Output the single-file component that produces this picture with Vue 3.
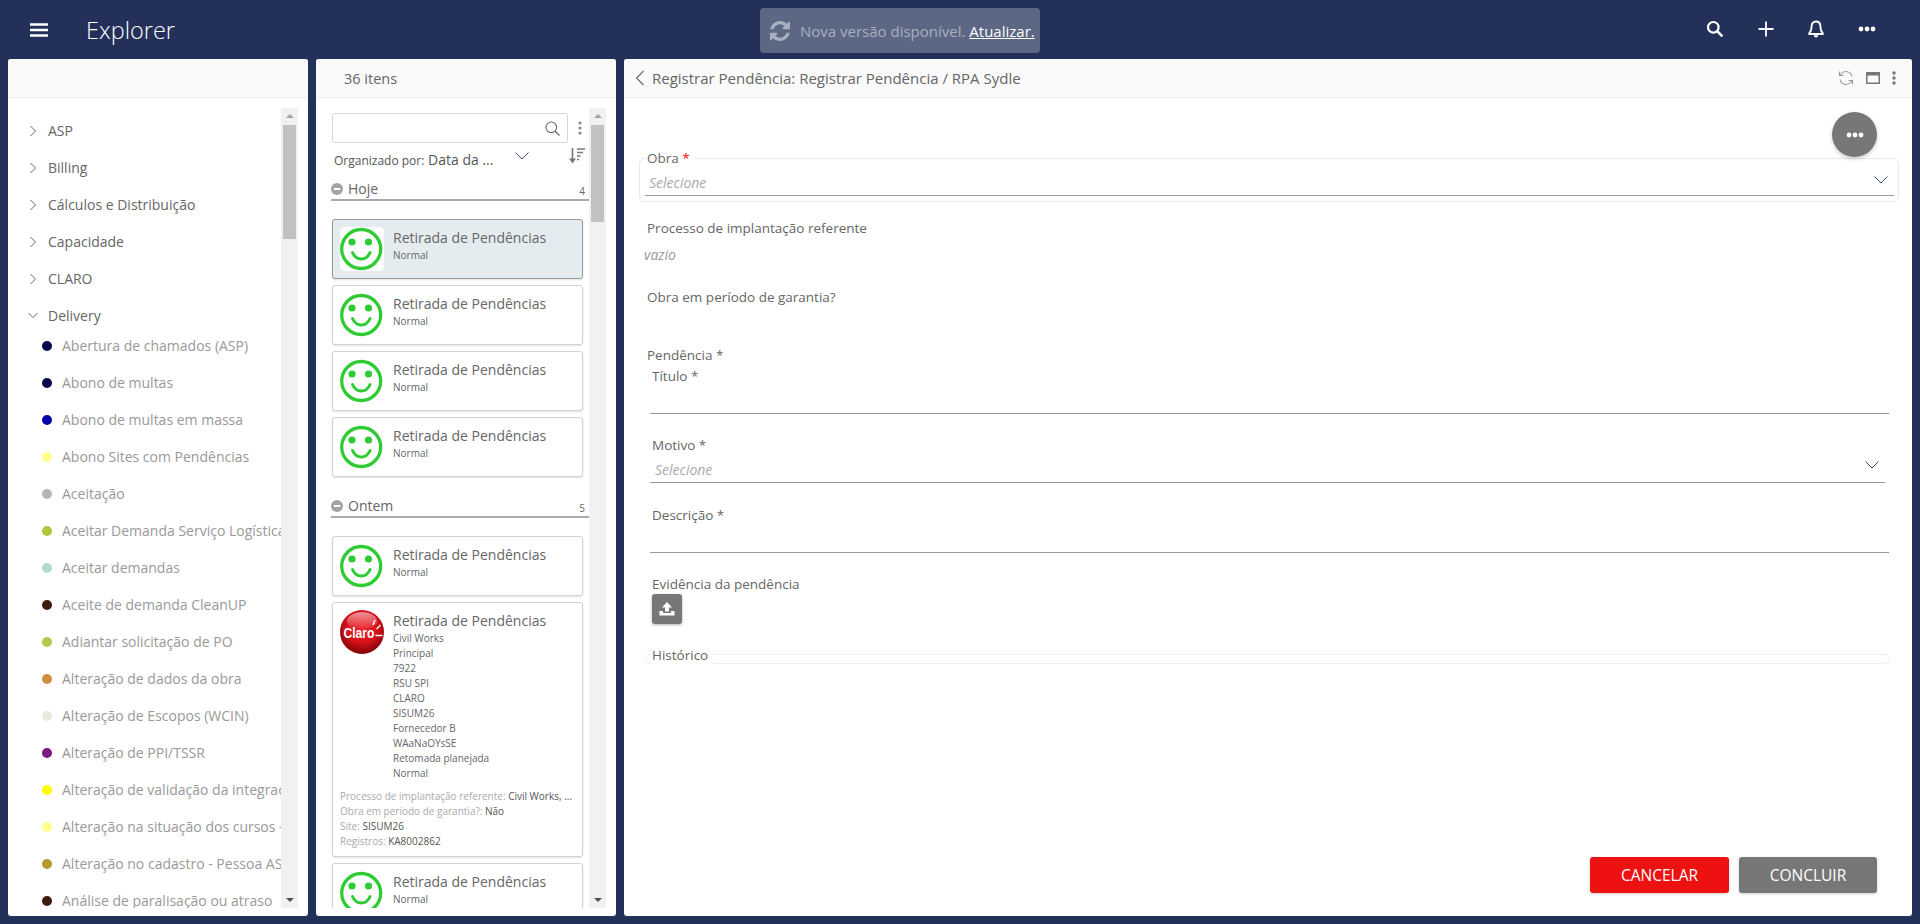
<script setup>
const treeTop = ['ASP', 'Billing', 'Cálculos e Distribuição', 'Capacidade', 'CLARO']
const deliveryItems = [
  { name: 'Abertura de chamados (ASP)', color: '#07074a' },
  { name: 'Abono de multas', color: '#07074a' },
  { name: 'Abono de multas em massa', color: '#0505a8' },
  { name: 'Abono Sites com Pendências', color: '#ffff8c' },
  { name: 'Aceitação', color: '#b5b5b5' },
  { name: 'Aceitar Demanda Serviço Logística', color: '#afc63f' },
  { name: 'Aceitar demandas', color: '#b0dccb' },
  { name: 'Aceite de demanda CleanUP', color: '#3f1a0a' },
  { name: 'Adiantar solicitação de PO', color: '#afc94a' },
  { name: 'Alteração de dados da obra', color: '#cf8f3f' },
  { name: 'Alteração de Escopos (WCIN)', color: '#e9e9dc' },
  { name: 'Alteração de PPI/TSSR', color: '#7a1a80' },
  { name: 'Alteração de validação da integração', color: '#ffff00' },
  { name: 'Alteração na situação dos cursos - ASP', color: '#ffff8c' },
  { name: 'Alteração no cadastro - Pessoa ASP', color: '#b59a2f' },
  { name: 'Análise de paralisação ou atraso', color: '#3f1a0a' }
]
const claroLines = ['Civil Works', 'Principal', '7922', 'RSU SPI', 'CLARO', 'SISUM26', 'Fornecedor B', 'WAaNaOYsSE', 'Retomada planejada', 'Normal']
const claroFields = [
  { k: 'Processo de implantação referente:', v: 'Civil Works, ...' },
  { k: 'Obra em período de garantia?:', v: 'Não' },
  { k: 'Site:', v: 'SISUM26' },
  { k: 'Registros:', v: 'KA8002862' }
]
const groups = [
  { title: 'Hoje', count: 4, cards: [{ selected: true }, {}, {}, {}] },
  { title: 'Ontem', count: 5, cards: [{}, { claro: true }, {}] }
]
</script>

<template>
  <div class="app">
    <header class="topbar">
      <svg class="burger" width="18" height="14" viewBox="0 0 18 14"><path d="M0 1.500h18M0 7h18M0 12.500h18" stroke="#fff" stroke-width="2.400" /></svg>
      <span class="brand">Explorer</span>
      <div class="notice">
        <svg width="20" height="20" viewBox="0 0 1536 1536"><path fill="#a9afbf" d="M1511 928q0 5-1 7-64 268-268 434.500t-478 166.500q-146 0-282.500-55t-243.500-157l-129 129q-19 19-45 19t-45-19-19-45v-448q0-26 19-45t45-19h448q26 0 45 19t19 45-19 45l-137 137q71 66 161 102t187 36q134 0 250-65t186-179q11-17 53-117 8-23 30-23h192q13 0 22.500 9.500t9.500 22.500zm25-800v448q0 26-19 45t-45 19h-448q-26 0-45-19t-19-45 19-45l138-138q-148-137-349-137-134 0-250 65t-186 179q-11 17-53 117-8 23-30 23h-199q-13 0-22.500-9.500t-9.500-22.500v-7q65-268 270-434.500t480-166.500q146 0 284 55.500t245 156.500l130-129q19-19 45-19t45 19 19 45z" /></svg>
        <span>Nova versão disponível. <a class="notice-link">Atualizar.</a></span>
      </div>
      <div class="top-actions">
        <svg width="18" height="18" viewBox="0 0 18 18"><circle cx="7.300" cy="7.300" r="5.300" fill="none" stroke="#fff" stroke-width="2.200" /><path d="M11.200 11.200L16.400 16.400" stroke="#fff" stroke-width="2.600" /></svg>
        <svg width="16" height="16" viewBox="0 0 16 16"><path d="M8 0.500v15M0.500 8h15" stroke="#fff" stroke-width="1.800" /></svg>
        <svg width="16" height="18" viewBox="0 0 16 18"><path d="M8 1.500c-2.900 0-4.400 2.200-4.400 5 0 3.400-.8 5-2.300 6.600v.9h13.400v-.9c-1.500-1.600-2.300-3.200-2.300-6.600 0-2.800-1.500-5-4.400-5z" fill="none" stroke="#fff" stroke-width="1.900" /><path d="M5.800 15.200a2.200 2.200 0 0 0 4.400 0z" fill="#fff" /></svg>
        <svg width="18" height="18" viewBox="0 0 18 18"><circle cx="3" cy="9" r="2.400" fill="#fff" /><circle cx="9" cy="9" r="2.400" fill="#fff" /><circle cx="15" cy="9" r="2.400" fill="#fff" /></svg>
      </div>
    </header>

    <main class="panels">
      <section class="panel panel-tree">
        <div class="panel-head"></div>
        <div class="panel-body">
          <div class="tree">
            <div v-for="item in treeTop" :key="item" class="tree-row">
              <svg width="7" height="12" viewBox="0 0 7 12"><path d="M1 1l5 5-5 5" fill="none" stroke="#666" stroke-width="1" /></svg>
              <span>{{ item }}</span>
            </div>
            <div class="tree-row">
              <svg width="10" height="7" viewBox="0 0 10 7"><path d="M0.500 1l4.500 4.500L9.500 1" fill="none" stroke="#666" stroke-width="1" /></svg>
              <span class="open-label">Delivery</span>
            </div>
            <div class="tree-children">
              <div v-for="item in deliveryItems" :key="item.name" class="tree-child">
                <i class="dot" :style="{ background: item.color }"></i>
                <span>{{ item.name }}</span>
              </div>
            </div>
          </div>
          <div class="scrollbar">
            <i class="arrow-up"></i>
            <div class="thumb thumb-tree"></div>
            <i class="arrow-down"></i>
          </div>
        </div>
      </section>

      <section class="panel panel-list">
        <div class="panel-head list-head">36 itens</div>
        <div class="panel-body">
          <div class="list">
            <div class="search-row">
              <div class="search-box">
                <svg width="15" height="15" viewBox="0 0 15 15"><circle cx="6.300" cy="6.300" r="5.300" fill="none" stroke="#666" stroke-width="1.100" /><path d="M10 10l4.500 4.500" stroke="#666" stroke-width="1.300" /></svg>
              </div>
              <svg width="4" height="14" viewBox="0 0 4 14"><circle cx="2" cy="2" r="1.600" fill="#888" /><circle cx="2" cy="7" r="1.600" fill="#888" /><circle cx="2" cy="12" r="1.600" fill="#888" /></svg>
            </div>
            <div class="order-row">
              <span class="order-text"><span class="order-key">Organizado por:</span> Data da ...</span>
              <svg class="order-chevron" width="14" height="8" viewBox="0 0 14 8"><path d="M0.500 0.500L7 7l6.500-6.500" fill="none" stroke="#3a4a7a" stroke-width="1" /></svg>
              <svg class="order-sort" width="16" height="16" viewBox="0 0 16 16"><path d="M3.500 0v12" stroke="#777" stroke-width="1.600" /><path d="M0 10.500L3.500 15.500l3.500-5z" fill="#777" /><path d="M8 1h8M8 4.500h6M8 8h3.500M8 11.500h2" stroke="#777" stroke-width="1.600" /></svg>
            </div>
            <div v-for="group in groups" :key="group.title" class="group">
              <div class="group-head">
                <svg width="12" height="12" viewBox="0 0 12 12"><circle cx="6" cy="6" r="6" fill="#a3a3a3" /><path d="M2.800 6h6.400" stroke="#fff" stroke-width="2" /></svg>
                <span class="group-title">{{ group.title }}</span>
                <span class="group-count">{{ group.count }}</span>
              </div>
              <div class="cards">
                <article v-for="(card, i) in group.cards" :key="i" class="card" :class="{ selected: card.selected }">
                  <div class="card-main">
                    <svg v-if="card.claro" class="card-icon" width="44" height="44" viewBox="0 0 44 44">
                      <defs>
                        <radialGradient id="claroRed" cx="50%" cy="38%" r="62%">
                          <stop offset="0%" stop-color="#f0242c" />
                          <stop offset="60%" stop-color="#d5101a" />
                          <stop offset="100%" stop-color="#7c0206" />
                        </radialGradient>
                        <linearGradient id="claroGloss" x1="0" y1="0" x2="0" y2="1">
                          <stop offset="0%" stop-color="#fff" stop-opacity="0.55" />
                          <stop offset="100%" stop-color="#fff" stop-opacity="0" />
                        </linearGradient>
                      </defs>
                      <circle cx="22" cy="22" r="22" fill="url(#claroRed)" />
                      <ellipse cx="22" cy="11" rx="15" ry="9" fill="url(#claroGloss)" />
                      <text x="3.500" y="28" class="claro-word" textLength="31" lengthAdjust="spacingAndGlyphs">Claro</text>
                      <path d="M33 15l2-5M36.500 19l4-4M35.500 25.500h7" stroke="#fff" stroke-width="1.400" fill="none" />
                    </svg>
                    <svg v-else class="card-icon smile" width="44" height="44" viewBox="0 0 44 44">
                      <circle cx="21.200" cy="22" r="19.500" fill="#fff" stroke="#2fcb33" stroke-width="3.300" />
                      <circle cx="12" cy="15" r="3.600" fill="#2fcb33" />
                      <circle cx="28.500" cy="15" r="3.600" fill="#2fcb33" />
                      <path d="M12.500 25.500c2 4.500 5.300 6.500 8.800 6.500s6.800-2 8.800-6.500" fill="none" stroke="#2fcb33" stroke-width="3" stroke-linecap="round" />
                    </svg>
                    <div class="card-text">
                      <div class="card-title">Retirada de Pendências</div>
                      <template v-if="card.claro">
                        <div v-for="line in claroLines" :key="line" class="card-line">{{ line }}</div>
                      </template>
                      <div v-else class="card-line">Normal</div>
                    </div>
                  </div>
                  <div v-if="card.claro" class="card-fields">
                    <div v-for="f in claroFields" :key="f.k" class="card-field"><span class="field-key">{{ f.k }}</span> {{ f.v }}</div>
                  </div>
                </article>
              </div>
            </div>
          </div>
          <div class="scrollbar">
            <i class="arrow-up"></i>
            <div class="thumb thumb-list"></div>
            <i class="arrow-down"></i>
          </div>
        </div>
      </section>

      <section class="panel panel-form">
        <div class="panel-head form-head">
          <svg width="10" height="16" viewBox="0 0 10 16"><path d="M8.500 1L1.500 8l7 7" fill="none" stroke="#666" stroke-width="1.100" /></svg>
          <span class="form-title">Registrar Pendência: Registrar Pendência / RPA Sydle</span>
          <div class="head-tools">
            <svg width="16" height="16" viewBox="0 0 16 16"><path d="M14 6.500A6.200 6.200 0 0 0 3 4l-1.500 1.500M2 9.500A6.200 6.200 0 0 0 13 12l1.500-1.500" fill="none" stroke="#999" stroke-width="1.100" /><path d="M1.500 1.500v4h4M14.500 14.500v-4h-4" fill="none" stroke="#999" stroke-width="1.100" /></svg>
            <svg width="14" height="12" viewBox="0 0 14 12"><path d="M0 0h14v12H0z M1.500 3.500v7h11v-7z" fill="#777" fill-rule="evenodd" /></svg>
            <svg width="4" height="14" viewBox="0 0 4 14"><circle cx="2" cy="2" r="1.700" fill="#777" /><circle cx="2" cy="7" r="1.700" fill="#777" /><circle cx="2" cy="12" r="1.700" fill="#777" /></svg>
          </div>
        </div>
        <div class="form-body">
          <button class="fab">
            <svg width="18" height="6" viewBox="0 0 18 6"><circle cx="3" cy="3" r="2.400" fill="#fff" /><circle cx="9" cy="3" r="2.400" fill="#fff" /><circle cx="15" cy="3" r="2.400" fill="#fff" /></svg>
          </button>
          <div class="form">
            <div class="box box-obra">
              <label class="box-label">Obra <b>*</b></label>
              <div class="select-row">
                <span class="placeholder">Selecione</span>
                <svg width="14" height="8" viewBox="0 0 14 8"><path d="M0.500 0.500L7 7l6.500-6.500" fill="none" stroke="#3a4a7a" stroke-width="1" /></svg>
              </div>
            </div>
            <div class="ro-label first">Processo de implantação referente</div>
            <div class="empty-value">vazio</div>
            <div class="ro-label guarantee">Obra em período de garantia?</div>
            <div class="ro-label pending">Pendência *</div>
            <div class="sub-field title-field">
              <label>Título *</label>
              <div class="line-input"></div>
            </div>
            <div class="sub-field">
              <label>Motivo *</label>
              <div class="select-row sub-select">
                <span class="placeholder">Selecione</span>
                <svg width="14" height="8" viewBox="0 0 14 8"><path d="M0.500 0.500L7 7l6.500-6.500" fill="none" stroke="#3a4a7a" stroke-width="1" /></svg>
              </div>
            </div>
            <div class="sub-field desc-field">
              <label>Descrição *</label>
              <div class="line-input"></div>
            </div>
            <div class="sub-field">
              <label>Evidência da pendência</label>
              <button class="upload">
                <svg width="16" height="14" viewBox="0 0 16 14"><path d="M8 0l5 5.500H10V9.500H6V5.500H3z" fill="#fff" /><path d="M0.500 9h3.500v2h8V9h3.500v4.500H.5z" fill="#fff" /></svg>
              </button>
            </div>
            <div class="box box-history">
              <label class="box-label">Histórico</label>
            </div>
          </div>
          <div class="form-actions">
            <button class="btn btn-cancel">CANCELAR</button>
            <button class="btn btn-done">CONCLUIR</button>
          </div>
        </div>
      </section>
    </main>
  </div>
</template>

<style>
html, body {
  margin: 0;
  background: #233059;
}
</style>

<style scoped>
.app {
  height: 924px;
  display: flex;
  flex-direction: column;
  overflow: hidden;
  background: #233059;
  font-family: "Open Sans", "Liberation Sans", sans-serif;
  font-size: 14px;
  color: #666;
}

/* top bar */
.topbar {
  height: 59px;
  flex: none;
  display: flex;
  align-items: center;
  position: relative;
}
.burger {
  margin-left: 30px;
}
.brand {
  margin-left: 38px;
  font-size: 23.5px;
  font-weight: 300;
  color: #fff;
}
.notice {
  position: absolute;
  left: 760px;
  top: 8px;
  width: 280px;
  height: 45px;
  box-sizing: border-box;
  padding-left: 10px;
  display: flex;
  align-items: center;
  gap: 10px;
  background: #5c6784;
  border-radius: 4px;
  font-size: 15px;
  color: #a9afbf;
  white-space: nowrap;
}
.notice-link {
  color: #fff;
  font-weight: 500;
  text-decoration: underline;
}
.top-actions {
  margin-left: auto;
  margin-right: 44px;
  margin-top: -2px;
  display: flex;
  align-items: center;
  gap: 34px;
}

/* panels */
.panels {
  flex: 1;
  min-height: 0;
  display: flex;
  gap: 8px;
  padding: 0 8px 8px;
}
.panel {
  background: #fff;
  border-radius: 3px;
  display: flex;
  flex-direction: column;
  overflow: hidden;
}
.panel-tree,
.panel-list {
  width: 300px;
  flex: none;
}
.panel-form {
  flex: 1;
  min-width: 0;
}
.panel-head {
  height: 39px;
  flex: none;
  box-sizing: border-box;
  background: #fafafa;
  border-bottom: 1px solid #ececec;
}
.panel-body {
  flex: 1;
  min-height: 0;
  display: flex;
  padding: 10px 10px 8px 0;
}

/* fake scrollbars */
.scrollbar {
  width: 17px;
  flex: none;
  background: #f1f1f1;
  display: flex;
  flex-direction: column;
  align-items: center;
}
.arrow-up,
.arrow-down {
  width: 0;
  height: 0;
  flex: none;
  border-left: 4px solid transparent;
  border-right: 4px solid transparent;
}
.arrow-up {
  margin-top: 6px;
  border-bottom: 4px solid #a3a3a3;
}
.arrow-down {
  margin-top: auto;
  margin-bottom: 6px;
  border-top: 4px solid #505050;
}
.thumb {
  width: 13px;
  margin-top: 7px;
  background: #c1c1c1;
}
.thumb-tree {
  height: 114px;
}
.thumb-list {
  height: 97px;
}

/* tree */
.tree {
  flex: 1;
  min-width: 0;
  overflow: hidden;
  padding-top: 4px;
}
.tree-row {
  height: 37px;
  display: flex;
  align-items: center;
  white-space: nowrap;
  padding-left: 20px;
}
.tree-row svg {
  width: 10px;
  margin-right: 10px;
}
.tree-row span {
  color: #666;
}
.tree-children {
  margin-top: -7px;
}
.tree-child {
  height: 37px;
  display: flex;
  align-items: center;
  padding-left: 34px;
  white-space: nowrap;
  color: #999;
}
.dot {
  width: 10px;
  height: 10px;
  flex: none;
  border-radius: 50%;
  margin-right: 10px;
}

/* list */
.list-head {
  padding-left: 28px;
  line-height: 40px;
  font-size: 14.5px;
  color: #666;
}
.list {
  flex: 1;
  min-width: 0;
  overflow: hidden;
  padding: 5px 0 0 15px;
}
.search-row {
  display: flex;
  align-items: center;
  gap: 10px;
  margin-left: 1px;
}
.search-box {
  width: 236px;
  height: 30px;
  box-sizing: border-box;
  border: 1px solid #d8d8d8;
  border-radius: 2px;
  display: flex;
  align-items: center;
  justify-content: flex-end;
  padding-right: 7px;
}
.order-row {
  height: 29px;
  margin-top: 5px;
  display: flex;
  align-items: flex-start;
  margin-left: 3px;
  white-space: nowrap;
}
.order-text {
  line-height: 24px;
  color: #555;
}
.order-key {
  font-size: 12px;
  color: #555;
}
.order-chevron {
  flex: none;
  margin-left: 22px;
  margin-top: 4px;
}
.order-sort {
  flex: none;
  margin-left: 40px;
}
.group-head {
  height: 24px;
  box-sizing: border-box;
  display: flex;
  align-items: center;
  padding-top: 1px;
  border-bottom: 2px solid #aaa;
}
.group-title {
  margin-left: 5px;
  color: #666;
}
.group-count {
  margin-left: auto;
  margin-right: 4px;
  font-size: 10px;
  margin-top: 4px;
}
.cards {
  display: flex;
  flex-direction: column;
  gap: 6px;
  padding: 18px 6px 17px 1px;
}
.card {
  box-sizing: border-box;
  border: 1px solid #d2d2d2;
  border-radius: 3px;
  box-shadow: 0 1px 2px rgba(0, 0, 0, 0.12);
  padding: 7px 7px 7px;
  background: #fff;
}
.card.selected {
  background: #e5ecef;
  border-color: #999;
}
.card-main {
  display: flex;
  align-items: flex-start;
}
.card-icon {
  flex: none;
  display: block;
}
.smile {
  background: #fff;
  border-radius: 5px;
}
.claro-word {
  font-family: "Liberation Sans", sans-serif;
  font-size: 14px;
  font-weight: 700;
  fill: #fff;
}
.card-text {
  margin-left: 9px;
  min-width: 0;
  padding-top: 1px;
}
.card-title {
  line-height: 20px;
  color: #666;
  white-space: nowrap;
}
.card-line {
  font-size: 10px;
  line-height: 15px;
  color: #666;
  white-space: nowrap;
}
.card-fields {
  margin-top: 8px;
}
.card-field {
  font-size: 10px;
  line-height: 15px;
  color: #555;
  white-space: nowrap;
}
.field-key {
  color: #aaa;
}

/* form panel */
.form-head {
  display: flex;
  align-items: center;
  padding-left: 11px;
}
.form-title {
  margin-left: 7px;
  font-size: 15px;
  color: #666;
}
.head-tools {
  margin-left: auto;
  margin-right: 16px;
  display: flex;
  align-items: center;
  gap: 12px;
}
.form-body {
  flex: 1;
  min-height: 0;
  display: flex;
  flex-direction: column;
  position: relative;
  font-size: 13.5px;
}
.form {
  flex: 1;
  padding-top: 60px;
}
.fab {
  position: absolute;
  top: 14px;
  right: 35px;
  width: 45px;
  height: 45px;
  border: none;
  padding: 0;
  border-radius: 50%;
  background: #777;
  box-shadow: 0 2px 4px rgba(0, 0, 0, 0.2);
  display: flex;
  align-items: center;
  justify-content: center;
}
.box {
  border: 1px solid #e8e8e8;
  border-radius: 6px;
  box-sizing: border-box;
}
.box-obra {
  height: 44px;
  margin: 0 13px 0 15px;
}
.box-label {
  display: table;
  height: 20px;
  line-height: 20px;
  margin: -11px 0 0 7px;
  padding-right: 5px;
  background: #fff;
  color: #666;
}
.box-label b {
  color: #f00;
  font-weight: 400;
}
.select-row {
  height: 22px;
  margin: 5px 4px 0 5px;
  padding: 0 6px 0 4px;
  display: flex;
  align-items: center;
  justify-content: space-between;
  border-bottom: 1px solid #999;
}
.select-row svg {
  margin-top: -8px;
}
.placeholder {
  font-size: 14px;
  line-height: 18px;
  margin-top: -2px;
  font-style: italic;
  color: #aaa;
}
.ro-label {
  margin-left: 23px;
  height: 20px;
  line-height: 20px;
  color: #666;
}
.ro-label.first {
  margin-top: 16px;
}
.empty-value {
  margin: 7px 0 0 20px;
  height: 20px;
  line-height: 20px;
  font-size: 14px;
  font-style: italic;
  color: #999;
}
.ro-label.guarantee {
  margin-top: 22px;
}
.ro-label.pending {
  margin-top: 38px;
}
.sub-field {
  margin: 21px 23px 0 26px;
}
.title-field {
  margin-top: 1px;
}
.desc-field {
  margin-top: 22px;
}
.sub-field label {
  display: block;
  height: 20px;
  line-height: 20px;
  margin-left: 2px;
  color: #666;
}
.line-input {
  height: 27px;
  border-bottom: 1px solid #999;
}
.sub-select {
  height: 27px;
  margin: 0 4px 0 0;
  padding: 0 6px 0 5px;
}
.sub-select .placeholder {
  margin-top: 2px;
}
.upload {
  width: 30px;
  height: 30px;
  margin-left: 2px;
  padding: 0;
  border: none;
  border-radius: 3px;
  background: #777;
  box-shadow: 0 1px 3px rgba(0, 0, 0, 0.3);
  display: flex;
  align-items: center;
  justify-content: center;
}
.box-history {
  height: 10px;
  margin: 30px 22px 0 21px;
  border-color: #efefef;
}
.box-history .box-label {
  margin-left: 6px;
  margin-top: -10px;
}
.form-actions {
  display: flex;
  justify-content: flex-end;
  gap: 10px;
  padding: 0 35px 23px 0;
}
.btn {
  height: 36px;
  border: none;
  border-radius: 3px;
  font-family: inherit;
  font-size: 15.5px;
  color: #fff;
  box-shadow: 0 1px 3px rgba(0, 0, 0, 0.2);
}
.btn-cancel {
  width: 139px;
  background: #ee1111;
}
.btn-done {
  width: 138px;
  background: #777;
}
</style>
